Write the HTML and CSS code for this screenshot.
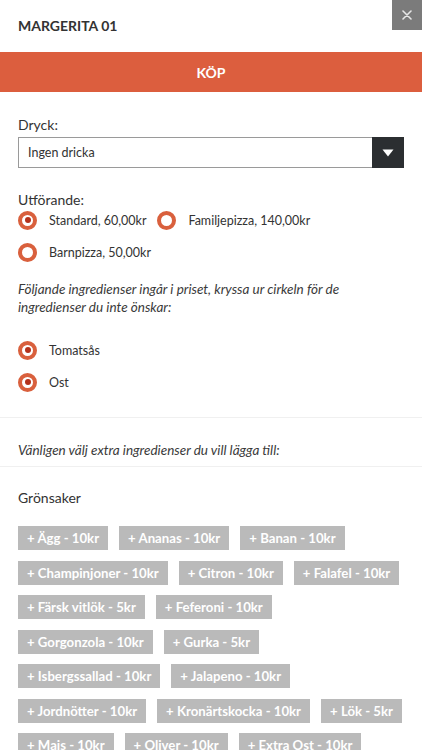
FILE: index.html
```html
<!DOCTYPE html>
<html lang="sv">
<head>
<meta charset="utf-8">
<title>Margerita 01</title>
<link rel="stylesheet" href="styles.css">
</head>
<body>
<div class="modal">
  <header class="header">
    <h1 class="title">MARGERITA 01</h1>
    <button class="close" aria-label="Stäng">
      <svg width="10" height="10" viewBox="0 0 10 10"><path d="M1 1L9 9M9 1L1 9" stroke="#e6e6e6" stroke-width="1.6" stroke-linecap="round"/></svg>
    </button>
  </header>
  <div class="buy">KÖP</div>

  <div class="content">
    <div class="label label-dryck">Dryck:</div>
    <div class="select">
      <span class="select-text">Ingen dricka</span>
      <span class="select-arrow">
        <svg width="12" height="8" viewBox="0 0 12 8"><path d="M0.5 0.5H11.5L6 7.5Z" fill="#fff"/></svg>
      </span>
    </div>

    <div class="label label-utf">Utförande:</div>
    <div class="radio-group">
      <label class="radio"><span class="dot checked"></span><span>Standard, 60,00kr</span></label>
      <label class="radio"><span class="dot"></span><span>Familjepizza, 140,00kr</span></label>
      <label class="radio"><span class="dot"></span><span>Barnpizza, 50,00kr</span></label>
    </div>

    <p class="note">Följande ingredienser ingår i priset, kryssa ur cirkeln för de ingredienser du inte önskar:</p>

    <div class="radio-list">
      <label class="radio"><span class="dot checked"></span><span>Tomatsås</span></label>
      <label class="radio"><span class="dot checked"></span><span>Ost</span></label>
    </div>
  </div>

  <div class="sep sep-1"></div>
  <div class="content">
    <p class="note note-extra">Vänligen välj extra ingredienser du vill lägga till:</p>
  </div>
  <div class="sep sep-2"></div>

  <div class="content">
    <div class="group-title">Grönsaker</div>
    <div class="tags">
      <span class="tag">+ Ägg - 10kr</span>
      <span class="tag">+ Ananas - 10kr</span>
      <span class="tag">+ Banan - 10kr</span>
      <span class="tag">+ Champinjoner - 10kr</span>
      <span class="tag">+ Citron - 10kr</span>
      <span class="tag">+ Falafel - 10kr</span>
      <span class="tag">+ Färsk vitlök - 5kr</span>
      <span class="tag">+ Feferoni - 10kr</span>
      <span class="tag">+ Gorgonzola - 10kr</span>
      <span class="tag">+ Gurka - 5kr</span>
      <span class="tag">+ Isbergssallad - 10kr</span>
      <span class="tag">+ Jalapeno - 10kr</span>
      <span class="tag">+ Jordnötter - 10kr</span>
      <span class="tag">+ Kronärtskocka - 10kr</span>
      <span class="tag">+ Lök - 5kr</span>
      <span class="tag">+ Mais - 10kr</span>
      <span class="tag">+ Oliver - 10kr</span>
      <span class="tag">+ Extra Ost - 10kr</span>
    </div>
  </div>
</div>
</body>
</html>
```

FILE: styles.css
```css
* { box-sizing: border-box; }
html, body { margin: 0; padding: 0; background: #fff; }
body {
  font-family: Lato, "Open Sans", "Liberation Sans", sans-serif;
  color: #333;
  font-size: 14px;
  overflow: hidden;
  height: 750px;
}
.modal { position: relative; }
.header {
  height: 52px;
  display: flex;
  align-items: center;
  padding: 0 18px;
  padding-bottom: 1px;
}
.title {
  margin: 0;
  font-size: 14px;
  font-weight: 700;
  color: #333;
}
.close {
  position: absolute;
  top: 0;
  right: 0;
  width: 30px;
  height: 30px;
  border: 0;
  padding: 0;
  background: #7b7b7b;
  display: flex;
  align-items: center;
  justify-content: center;
}
.buy {
  height: 40px;
  background: #dc5e3e;
  color: #fff;
  font-weight: 700;
  font-size: 14px;
  display: flex;
  align-items: center;
  justify-content: center;
}
.content { padding: 0 18px; }
.label { line-height: 18px; font-size: 14px; color: #333; }
.label-dryck { margin-top: 24px; }
.select {
  margin-top: 3px;
  height: 31px;
  border: 1px solid #9a9a9a;
  display: flex;
  align-items: stretch;
}
.select-text {
  flex: 1;
  display: flex;
  align-items: center;
  padding-left: 9px;
  font-size: 12.5px;
  color: #333;
}
.select-arrow {
  width: 32px;
  background: #2b2e31;
  display: flex;
  align-items: center;
  justify-content: center;
  margin: -1px -1px -1px 0;
}
.label-utf { margin-top: 23px; }
.radio-group {
  display: flex;
  flex-wrap: wrap;
  column-gap: 11px;
  row-gap: 10px;
}
.radio {
  display: flex;
  align-items: center;
  height: 22px;
  gap: 12px;
  font-size: 12.5px;
  color: #333;
}
.dot {
  width: 19px;
  height: 19px;
  border-radius: 50%;
  border: 4px solid #d9603d;
  background: #fff;
  display: flex;
  align-items: center;
  justify-content: center;
  flex: none;
}
.dot.checked::after {
  content: "";
  width: 6px;
  height: 6px;
  border-radius: 50%;
  background: #b4321c;
}
.note {
  margin: 17px 0 0;
  font-style: italic;
  font-size: 13.5px;
  line-height: 18px;
  color: #3a3a3a;
}
.radio-list {
  margin-top: 23px;
  display: flex;
  flex-direction: column;
  gap: 10px;
}
.sep {
  height: 1px;
  background: #f0f0f0;
}
.sep-1 { margin-top: 24px; }
.note-extra { margin-top: 23px; }
.sep-2 { margin-top: 7px; }
.group-title {
  margin-top: 22px;
  line-height: 18px;
  font-size: 14px;
  color: #333;
}
.tags {
  margin-top: 19px;
  margin-right: -4px;
  display: flex;
  flex-wrap: wrap;
  column-gap: 11px;
  row-gap: 10.5px;
}
.tag {
  height: 24px;
  padding: 0 9px;
  background: #bababa;
  color: #fff;
  font-weight: 700;
  font-size: 13.2px;
  display: flex;
  align-items: center;
  white-space: nowrap;
}
```
